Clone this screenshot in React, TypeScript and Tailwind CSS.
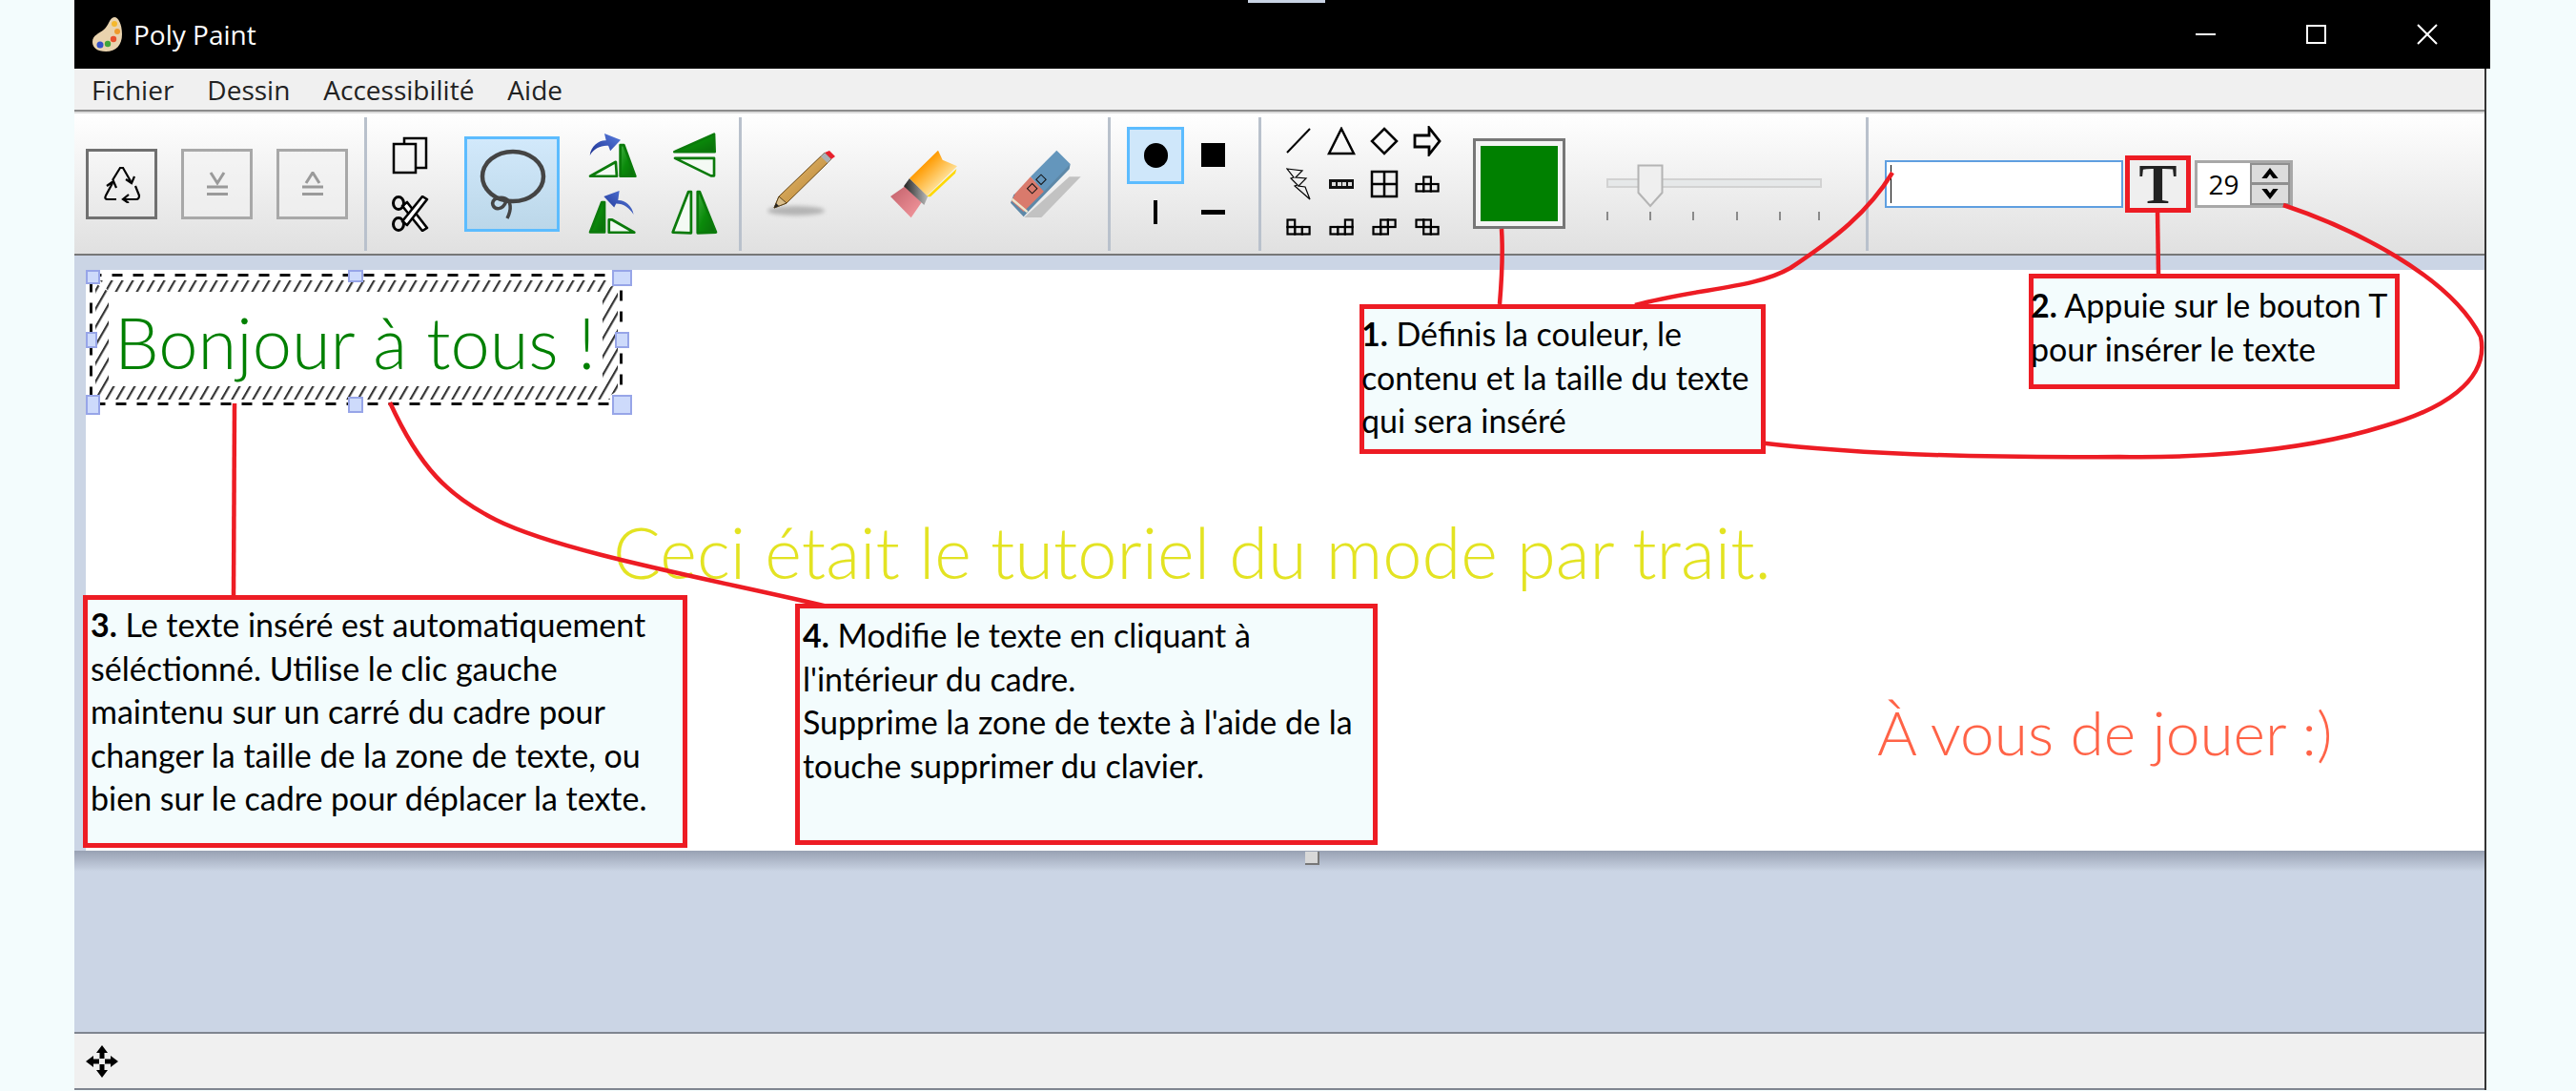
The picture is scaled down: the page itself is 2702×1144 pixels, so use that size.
function Separator({ className }: { className: string }) {
  return <div className={`w-[3px] h-[140px] shrink-0 bg-[#b9c1cc] ${className}`} />;
}

function RecycleIcon() {
  return (
    <svg width="40" height="40" viewBox="0 0 40 40" fill="none" stroke="#000" strokeWidth="2.200">
      <path d="M10 16 18 3H21L29 17M24 15 30 19 33 12" />
      <path d="M34 22 38 32Q38 36 35 36H22M27 31 21 36 27 40" />
      <path d="M14 36H5Q1 36 3 32L10 19M4 22 11 17 14 24" />
    </svg>
  );
}

function ScissorsIcon() {
  return (
    <svg width="40" height="38" viewBox="0 0 40 38" fill="none" stroke="#000" strokeWidth="2.600">
      <path d="M12 11 33 37 38 34 17 7Z" fill="#fff" strokeLinejoin="round" />
      <path d="M12 27 33 1 38 4 17 31Z" fill="#fff" strokeLinejoin="round" />
      <ellipse cx="8" cy="8" rx="5.500" ry="6.500" strokeWidth="3" />
      <ellipse cx="8" cy="30" rx="5.500" ry="6.500" strokeWidth="3" />
    </svg>
  );
}

function StackButton({ up }: { up?: boolean }) {
  return (
    <button className="w-[75px] h-[74px] flex items-center justify-center border-[3px] border-[#a8a8a8] bg-[#f2f2f2]/60">
      <svg width="24" height="26" viewBox="0 0 24 26" fill="none" stroke="#9a9a9a" strokeWidth="3">
        <path d={up ? 'M5 12 12 1 19 12' : 'M5 1 12 12 19 1'} />
        <path d="M1 16h22M1 23.500h22" />
      </svg>
    </button>
  );
}

function CopyIcon() {
  return (
    <svg width="38" height="40" viewBox="0 0 38 40" fill="none" stroke="#000" strokeWidth="2.500">
      <path d="M13 7V2h23v31h-12" />
      <rect x="2" y="8" width="23" height="30" fill="none" />
    </svg>
  );
}

function LassoIcon() {
  return (
    <svg width="76" height="76" viewBox="0 0 76 76" fill="none" stroke="#444" strokeWidth="4.500" className="blur-[0.7px]">
      <ellipse cx="39" cy="30" rx="32" ry="26" />
      <path d="M32 56c-4 10-12 9-14 4-2-7 8-9 13-7 6 3 7 11 2 21" strokeWidth="3.500" />
    </svg>
  );
}

function FlipIcons() {
  return (
    <div className="grid grid-cols-[51px_51px] gap-x-[35px] gap-y-[12px]">
      <svg width="51" height="48" viewBox="50 40 150 140">
        <path d="M55 110C58 80 85 62 105 64L100 42 150 62 118 96 112 80C90 78 68 88 55 110Z" fill="url(#blueArrow)" />
        <path d="M56 174 135 130 138 174Z" fill="#f4faf4" stroke="#0b7a0b" strokeWidth="8" strokeLinejoin="round" />
        <path d="M149 78 160 78 195 174H149Z" fill="url(#greenTri)" stroke="#0b7a0b" strokeWidth="8" strokeLinejoin="round" />
      </svg>
      <svg width="51" height="48" viewBox="310 35 140 145">
        <path d="M316 96 442 40 444 96Z" fill="url(#greenTri)" stroke="#0b7a0b" strokeWidth="8" strokeLinejoin="round" />
        <path d="M318 116 442 116 442 172 432 172Z" fill="#f4faf4" stroke="#0b7a0b" strokeWidth="8" strokeLinejoin="round" />
      </svg>
      <svg width="51" height="48" viewBox="50 220 150 140">
        <path d="M190 296C186 268 160 250 142 252L146 222 98 240 130 274 136 262C160 262 178 276 190 296Z" fill="url(#blueArrow)" />
        <path d="M56 350 92 258 100 258 100 350Z" fill="url(#greenTri)" stroke="#0b7a0b" strokeWidth="8" strokeLinejoin="round" />
        <path d="M114 312 124 312 192 351 114 351Z" fill="#f4faf4" stroke="#0b7a0b" strokeWidth="8" strokeLinejoin="round" />
      </svg>
      <svg width="51" height="48" viewBox="310 220 145 140">
        <path d="M316 350 364 226 372 226 372 352Z" fill="#f4faf4" stroke="#0b7a0b" strokeWidth="8" strokeLinejoin="round" />
        <path d="M392 226 398 226 448 350 392 352Z" fill="url(#greenTri)" stroke="#0b7a0b" strokeWidth="8" strokeLinejoin="round" />
      </svg>
    </div>
  );
}

function PencilIcon() {
  return (
    <svg width="76" height="74" viewBox="0 0 76 74">
      <ellipse cx="32" cy="65" rx="30" ry="5" fill="#888" opacity="0.55" className="blur-[2px]" />
      <path d="M9 62 14 50 62 4 69 11 22 57Z" fill="url(#pencilBody)" stroke="#6b4a18" strokeWidth="1" />
      <path d="M14 50 22 57 9 62Z" fill="#d9bd8a" stroke="#5b431b" strokeWidth="1" />
      <path d="M9 62 11 57 14 60Z" fill="#222" />
      <path d="M62 4 67 2 73 8 69 11Z" fill="#e8202c" />
      <path d="M58 8 62 4 69 11 65 15Z" fill="#aab0b6" />
    </svg>
  );
}

function BrushIcon() {
  return (
    <svg width="72" height="72" viewBox="40 50 216 216">
      <path d="M40 197 86 165 138 216 105 264Z" fill="url(#brushTip)" />
      <path d="M82 165 100 140 158 196 146 224Z" fill="url(#brushBand)" />
      <path d="M100 140 190 52 204 82 250 102 155 195Z" fill="url(#brushBody)" />
      <path d="M155 197 248 110 244 124 166 198Z" fill="#ffd800" />
    </svg>
  );
}

function EraserIcon() {
  return (
    <svg width="74" height="72" viewBox="415 45 222 216">
      <path d="M600 130H636L512 258H458Z" fill="#c2c2c2" />
      <path d="M603 90 600 106 470 240 456 256 415 212 425 186Z" fill="#5d88a8" />
      <path d="M478 130 520 176 456 240 418 206 430 182Z" fill="#d97a6c" />
      <path d="M420 196 470 238 466 244 418 204Z" fill="#ece5cc" />
      <path d="M560 47 603 90 520 176 478 130Z" fill="#6496bc" />
      <rect x="500" y="128" width="22" height="22" fill="none" stroke="#111" strokeWidth="3" transform="rotate(-45 511 139)" />
      <rect x="472" y="156" width="22" height="22" fill="none" stroke="#111" strokeWidth="3" transform="rotate(-45 483 167)" />
    </svg>
  );
}

function Tetromino({ cells }: { cells: [number, number][] }) {
  return (
    <svg width="26" height="18" viewBox="0 0 26 18" fill="none" stroke="#000" strokeWidth="2.200">
      {cells.map(([col, row]) => (
        <rect key={`${col}-${row}`} x={1.500 + col * 7.700} y={1.500 + row * 7.500} width="7.700" height="7.500" />
      ))}
    </svg>
  );
}

function ShapeGrid() {
  const shapes = [
    <svg width="28" height="28" viewBox="0 0 28 28" stroke="#000" strokeWidth="2"><path d="M2 26 26 1" /></svg>,
    <svg width="30" height="30" viewBox="0 0 30 30" fill="none" stroke="#000" strokeWidth="2.500"><path d="M15 2 28 28H2Z" /></svg>,
    <svg width="30" height="30" viewBox="0 0 30 30" fill="none" stroke="#000" strokeWidth="2.500"><path d="M15 2 28 15 15 28 2 15Z" /></svg>,
    <svg width="30" height="32" viewBox="0 0 30 32" fill="none" stroke="#000" strokeWidth="2.800"><path d="M2 10H17V2L28 16 17 30V22H2Z" /></svg>,
    <svg width="26" height="34" viewBox="0 0 26 34" fill="none" stroke="#000" strokeWidth="1.200"><path d="M1 1 17 3 10 10 21 11 13 19 20 20 25 33 9 19 12 18 5 11 8 10Z" /></svg>,
    <svg width="28" height="12" viewBox="0 0 28 12"><rect x="1" y="1" width="26" height="10" fill="#111" /><path d="M4 4h4v4H4zM10 4h4v4h-4zM15 4h4v4h-4zM21 4h4v4h-4z" fill="#ddd" /></svg>,
    <svg width="30" height="30" viewBox="0 0 30 30" fill="none" stroke="#000" strokeWidth="2.500"><path d="M2 2h26v26H2zM15 2v26M2 15h26" /></svg>,
    <Tetromino cells={[[1, 0], [0, 1], [1, 1], [2, 1]]} />,
    <Tetromino cells={[[0, 0], [0, 1], [1, 1], [2, 1]]} />,
    <Tetromino cells={[[2, 0], [0, 1], [1, 1], [2, 1]]} />,
    <Tetromino cells={[[1, 0], [2, 0], [0, 1], [1, 1]]} />,
    <Tetromino cells={[[0, 0], [1, 0], [1, 1], [2, 1]]} />,
  ];

  return (
    <div className="grid grid-cols-[repeat(4,45px)] grid-rows-[repeat(3,45px)] place-items-center">
      {shapes.map((shape, i) => (
        <div key={i} className="flex items-center justify-center">{shape}</div>
      ))}
    </div>
  );
}

function SizeSlider() {
  const ticks = [0, 45, 90, 136, 181, 222];
  return (
    <div className="relative w-[226px] h-[62px]">
      <div className="absolute left-0 right-0 top-[15px] h-[10px] bg-[#e6e8e9] border-2 border-[#d2d2d2]" />
      <svg className="absolute left-[32px] top-0" width="28" height="46" viewBox="0 0 28 46">
        <path d="M1.500 1.500H26.500V30L14 44 1.500 30Z" fill="#efefef" stroke="#b4b4b4" strokeWidth="2" />
      </svg>
      <div className="absolute left-0 right-0 top-[50px] h-[10px] flex">
        {ticks.map((x) => (
          <div key={x} className="absolute top-0 w-[2px] h-[9px] bg-[#8a8a8a]" style={{ left: x }} />
        ))}
      </div>
    </div>
  );
}

function Toolbar() {
  return (
    <div className="h-[151px] flex items-center pl-[12px] bg-gradient-to-b from-white to-[#e0e0e0] border-t-2 border-t-[#dcdcdc] border-b-2 border-b-[#777]">
      <button className="w-[75px] h-[74px] flex items-center justify-center border-[3px] border-[#707070]">
        <RecycleIcon />
      </button>
      <div className="ml-[25px]"><StackButton /></div>
      <div className="ml-[25px]"><StackButton up /></div>
      <Separator className="ml-[17px]" />

      <div className="ml-[25px] flex flex-col gap-[22px] w-[40px] items-center">
        <CopyIcon />
        <ScissorsIcon />
      </div>
      <button className="ml-[37px] w-[100px] h-[100px] flex items-center justify-center border-[3px] border-[#5cbcff] bg-gradient-to-b from-[#d2e9fb] to-[#bbd7e9]">
        <LassoIcon />
      </button>
      <div className="ml-[30px]"><FlipIcons /></div>
      <Separator className="ml-[21px]" />

      <div className="ml-[25px]"><PencilIcon /></div>
      <div className="ml-[55px]"><BrushIcon /></div>
      <div className="ml-[54px]"><EraserIcon /></div>
      <Separator className="ml-[28px]" />

      <div className="ml-[17px] grid grid-cols-[60px_60px] grid-rows-[60px_60px] place-items-center">
        <div className="w-[60px] h-[60px] flex items-center justify-center border-[3px] border-[#5cbcff] bg-[#cfe7fa]">
          <div className="w-[25px] h-[26px] rounded-full bg-black" />
        </div>
        <div className="w-[25px] h-[25px] bg-black" />
        <div className="w-[4px] h-[25px] bg-black" />
        <div className="w-[25px] h-[5px] bg-black" />
      </div>
      <Separator className="ml-[18px]" />

      <div className="ml-[16px]"><ShapeGrid /></div>

      <div className="ml-[26px] w-[97px] h-[95px] border-[3px] border-[#777] bg-[#f4f4f4] p-[5px]">
        <div className="w-full h-full bg-[#008000]" />
      </div>
      <div className="ml-[43px] mt-[20px]"><SizeSlider /></div>
      <Separator className="ml-[46px]" />

      <div className="ml-[17px] w-[250px] h-[50px] border-2 border-[#5f9fe0] bg-white flex items-center pl-[4px]">
        <div className="w-px h-[40px] bg-black" />
      </div>
      <button className="ml-[2px] w-[69px] h-[60px] flex items-center justify-center bg-[#efefef] font-['Liberation_Serif',serif] font-bold text-[60px] leading-none text-[#222]">
        T
      </button>
      <div className="ml-[4px] w-[103px] h-[50px] flex border-[3px] border-[#a8a8a8] bg-white">
        <span className="w-[55px] flex items-center justify-center font-['Open_Sans',sans-serif] text-[28px] text-black">29</span>
        <div className="flex-1 flex flex-col bg-[#8f8f8f] gap-[3px] p-[2px]">
          <div className="flex-1 bg-[#dcdcdc] flex items-center justify-center">
            <svg width="22" height="13" viewBox="0 0 18 12"><path d="M9 1 17 11H12L9 7 6 11H1Z" /></svg>
          </div>
          <div className="flex-1 bg-[#dcdcdc] flex items-center justify-center">
            <svg width="22" height="13" viewBox="0 0 18 12"><path d="M9 11 17 1H12L9 5 6 1H1Z" /></svg>
          </div>
        </div>
      </div>
    </div>
  );
}

function TitleBar() {
  return (
    <div className="relative h-[72px] w-[2534px] bg-black flex items-center text-white">
      <div className="absolute left-[1231px] top-0 w-[81px] h-[3px] bg-[#c9d3e4]" />
      <svg className="ml-[18px]" width="34" height="38" viewBox="0 0 34 38">
        <path d="M24 1C28 1 32 8 32 19 32 30 26 37 15 37 6 37 1 33 1 27 1 20 8 18 13 14 18 10 19 1 24 1Z" fill="#e9d3ae" />
        <circle cx="24" cy="8" r="3" fill="#f5b82e" />
        <circle cx="27" cy="16" r="3" fill="#ef9a2b" />
        <circle cx="23" cy="24" r="3.200" fill="#e8502c" />
        <circle cx="17" cy="29" r="3.200" fill="#3fa63a" />
        <circle cx="9" cy="30" r="3.500" fill="#3350c8" />
      </svg>
      <span className="ml-[10px] font-['Open_Sans',sans-serif] text-[28px]">Poly Paint</span>
      <svg className="absolute left-[2225px] top-[24px]" width="256" height="24" viewBox="0 0 256 24" fill="none" stroke="#fff" strokeWidth="2">
        <path d="M0 12H21M117 3H136V21H117ZM253 2 233 22M233 2 253 22" />
      </svg>
    </div>
  );
}

function MenuBar() {
  return (
    <div className="h-[45px] bg-[#f0f0f0] flex items-center pl-[18px] gap-[35px] font-['Open_Sans',sans-serif] text-[28px] text-[#222] border-b-2 border-b-[#8c8c8c]">
      <span>Fichier</span>
      <span>Dessin</span>
      <span>Accessibilité</span>
      <span>Aide</span>
    </div>
  );
}

function StatusBar() {
  return (
    <div className="h-[61px] bg-[#f0f0f0] border-y-2 border-y-[#7f8590] flex items-center pl-[12px]">
      <svg width="34" height="34" viewBox="0 0 34 34">
        <path d="M17 0 23 8H19.500V14H14.500V8H11ZM17 34 11 26H14.500V20H19.500V26H23ZM0 17 8 11V14.500H14V19.500H8V23ZM34 17 26 23V19.500H20V14.500H26V11Z" />
      </svg>
    </div>
  );
}

function SelectionFrame() {
  const handles = [
    'left-[90px] top-[283px] w-[15px] h-[15px]',
    'left-[365px] top-[283px] w-[16px] h-[13px]',
    'left-[642px] top-[283px] w-[21px] h-[17px]',
    'left-[90px] top-[348px] w-[12px] h-[17px]',
    'left-[645px] top-[348px] w-[15px] h-[17px]',
    'left-[90px] top-[414px] w-[15px] h-[21px]',
    'left-[365px] top-[416px] w-[16px] h-[17px]',
    'left-[642px] top-[414px] w-[21px] h-[21px]',
  ];

  return (
    <>
      <svg className="absolute left-[90px] top-[283px]" width="580" height="155" viewBox="90 283 580 155" fill="none">
        <defs>
          <pattern id="hatch" width="11" height="11" patternUnits="userSpaceOnUse" patternTransform="skewX(-30)">
            <rect width="2.500" height="11" fill="#333" />
          </pattern>
        </defs>
        <path d="M105 294H645L632 306H114ZM648 296V410L632 419V306ZM100 297 114 306V405L100 420ZM104 419 114 405H632L640 419Z" fill="url(#hatch)" />
        <rect x="95.500" y="288.500" width="556" height="135" stroke="#111" strokeWidth="3" strokeDasharray="11 11" />
      </svg>
      {handles.map((pos) => (
        <div key={pos} className={`absolute ${pos} border-2 border-[#97a5e8] bg-[#cddafb]`} />
      ))}
    </>
  );
}

function Callout({ className, children }: { className: string; children: React.ReactNode }) {
  return (
    <div className={`absolute border-[5px] border-[#ed1c24] bg-[#f3fcfd] font-['Lato',sans-serif] text-[34px] leading-[45.500px] text-black whitespace-nowrap ${className}`}>
      {children}
    </div>
  );
}

// red arrows drawn over the screenshot by the tutorial author
function Annotations() {
  return (
    <svg className="absolute left-0 top-0 pointer-events-none" width="2702" height="1144" viewBox="0 0 2702 1144" fill="none" stroke="#ed1c24" strokeWidth="4.500">
      <path d="M246 423 245 624" />
      <path d="M409 422C440 490 470 520 520 545 590 580 760 610 868 636" />
      <path d="M1575 240C1577 270 1575 295 1573 319" />
      <path d="M1985 181C1960 222 1925 250 1878 281 1840 303 1780 302 1715 320" />
      <path d="M2263 220 2264 287" />
      <path d="M2395 215C2470 240 2570 290 2602 353 2612 400 2560 430 2500 447 2400 478 2280 480 2223 479 2100 480 1950 477 1844 464" />
    </svg>
  );
}

export default function App() {
  return (
    <div className="relative w-[2702px] h-[1144px] overflow-hidden bg-[#f3fcfd]">
      <div className="ml-[78px] w-[2530px] h-[1143px] flex flex-col border-r-2 border-r-[#333]">
        <TitleBar />
        <MenuBar />
        <Toolbar />
        <div className="flex-1 bg-[#cbd5e5] flex flex-col">
          <div className="h-[15px] shrink-0" />
          <div className="ml-[12px] h-[609px] shrink-0 bg-white" />
          <div className="h-[22px] shrink-0 bg-gradient-to-b from-[#98a1b3] to-[#cbd5e5]" />
        </div>
        <StatusBar />
      </div>

      <div className="absolute left-[1369px] top-[893px] w-[15px] h-[14px] bg-[#d8d8d8] border-r-2 border-b-2 border-[#777]" />

      <SelectionFrame />
      <span className="absolute left-[120px] top-[311px] whitespace-nowrap font-['Lato',sans-serif] font-light text-[74px] leading-[96px] text-[#008000]">Bonjour à tous !</span>
      <span className="absolute left-[643px] top-[531px] whitespace-nowrap font-['Lato',sans-serif] font-light text-[74px] leading-[96px] text-[#e3e322]">Ceci était le tutoriel du mode par trait.</span>
      <span className="absolute left-[1969px] top-[728px] whitespace-nowrap font-['Lato',sans-serif] font-light text-[64px] leading-[80px] text-[#ff6347]">À vous de jouer :)</span>

      <Annotations />

      <Callout className="left-[1426px] top-[319px] w-[426px] h-[157px] pt-[3px]">
        <div className="-ml-[3px]"><b>1.</b> Définis la couleur, le<br />contenu et la taille du texte<br />qui sera inséré</div>
      </Callout>
      <Callout className="left-[2128px] top-[287px] w-[389px] h-[121px] pt-[5px]">
        <div className="-ml-[3px]"><b>2.</b> Appuie sur le bouton T<br />pour insérer le texte</div>
      </Callout>
      <Callout className="left-[87px] top-[624px] w-[634px] h-[265px] pl-[3px] pt-[3px]">
        <b>3.</b> Le texte inséré est automatiquement<br />séléctionné. Utilise le clic gauche<br />maintenu sur un carré du cadre pour<br />changer la taille de la zone de texte, ou<br />bien sur le cadre pour déplacer la texte.
      </Callout>
      <Callout className="left-[834px] top-[633px] w-[611px] h-[253px] pl-[3px] pt-[5px]">
        <b>4.</b> Modifie le texte en cliquant à<br />l'intérieur du cadre.<br />Supprime la zone de texte à l'aide de la<br />touche supprimer du clavier.
      </Callout>

      <div className="absolute left-[2229px] top-[163px] w-[69px] h-[60px] border-[5px] border-[#ed1c24]" />

      <svg width="0" height="0" className="absolute">
        <defs>
          <linearGradient id="greenTri" x1="0" y1="0" x2="1" y2="1">
            <stop offset="0" stopColor="#3fae3f" />
            <stop offset="0.500" stopColor="#0a8a0a" />
            <stop offset="1" stopColor="#0a6a0a" />
          </linearGradient>
          <linearGradient id="blueArrow" x1="0" y1="1" x2="1" y2="0">
            <stop offset="0" stopColor="#1b2f90" />
            <stop offset="1" stopColor="#5a7fe0" />
          </linearGradient>
          <linearGradient id="pencilBody" x1="0" y1="0" x2="1" y2="1">
            <stop offset="0" stopColor="#eec37a" />
            <stop offset="1" stopColor="#b07c2a" />
          </linearGradient>
          <linearGradient id="brushTip" x1="0" y1="0" x2="1" y2="1">
            <stop offset="0" stopColor="#c2606a" />
            <stop offset="1" stopColor="#f59aa0" />
          </linearGradient>
          <linearGradient id="brushBand" x1="0" y1="0" x2="1" y2="0">
            <stop offset="0" stopColor="#222" />
            <stop offset="1" stopColor="#bbb" />
          </linearGradient>
          <linearGradient id="brushBody" x1="0" y1="0" x2="1" y2="1">
            <stop offset="0.300" stopColor="#ff9a00" />
            <stop offset="0.800" stopColor="#fff4c0" />
          </linearGradient>
        </defs>
      </svg>
    </div>
  );
}
